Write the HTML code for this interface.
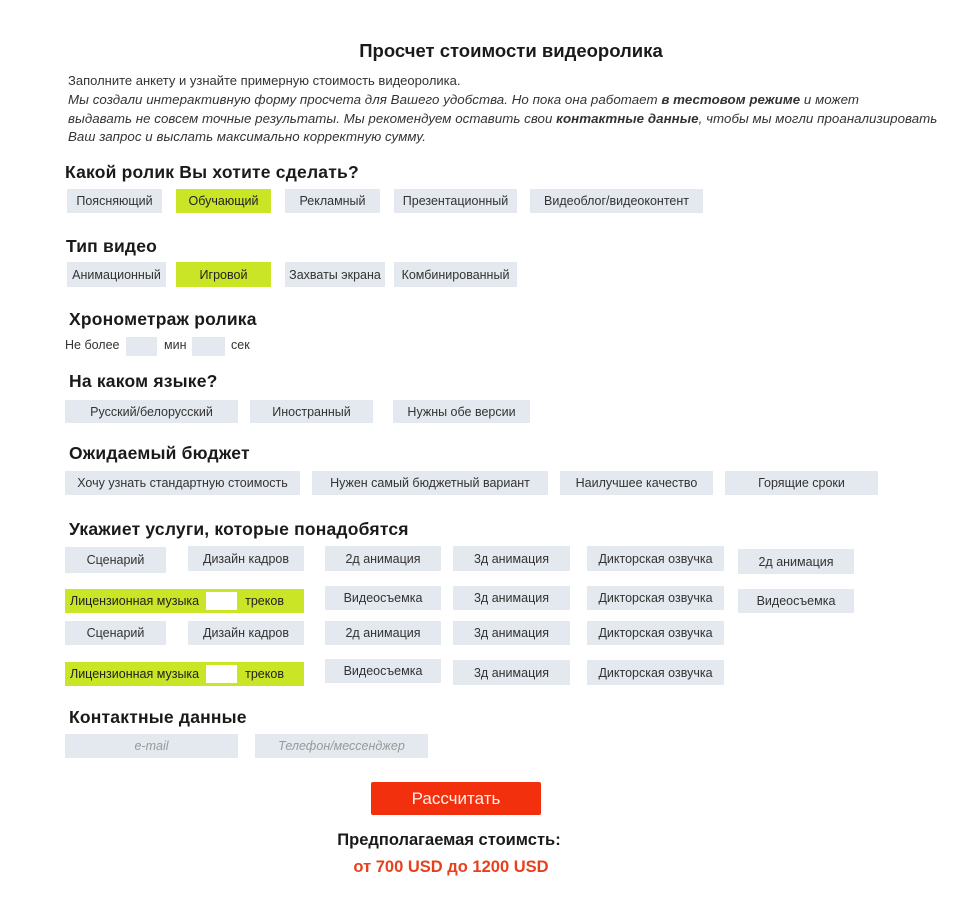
<!DOCTYPE html>
<html><head><meta charset="utf-8"><style>
body{margin:0;width:954px;height:907px;background:#fff;position:relative;font-family:"Liberation Sans",sans-serif;color:#222;overflow:hidden}
.a{position:absolute;white-space:nowrap}
.h{position:absolute;font-weight:bold;font-size:17.5px;letter-spacing:0.2px;color:#1a1a1a;white-space:nowrap}
.b{position:absolute;background:#e3e9ef;font-size:12.5px;color:#333;display:flex;align-items:center;justify-content:center;white-space:nowrap}
.g{background:#c9e526;color:#222}
.t{font-size:12.5px;color:#333}
.it{font-style:italic;font-size:13.3px;letter-spacing:0.05px}
i b{font-weight:bold}
</style></head><body>
<div class="a" style="left:0;width:1022px;text-align:center;top:40px;font-size:18.5px;font-weight:bold;color:#1a1a1a">Просчет стоимости видеоролика</div>
<div class="a t" style="left:68px;top:73px;font-size:13px">Заполните анкету и узнайте примерную стоимость видеоролика.</div>
<div class="a t it" style="left:68px;top:92px">Мы создали интерактивную форму просчета для Вашего удобства. Но пока она работает <b>в тестовом режиме</b> и может</div>
<div class="a t it" style="left:68px;top:111px">выдавать не совсем точные результаты. Мы рекомендуем оставить свои <b>контактные данные</b>, чтобы мы могли проанализировать</div>
<div class="a t it" style="left:68px;top:129px">Ваш запрос и выслать максимально корректную сумму.</div>

<div class="h" style="left:65px;top:162px">Какой ролик Вы хотите сделать?</div>
<div class="b" style="left:67px;top:189px;width:95px;height:24px">Поясняющий</div>
<div class="b g" style="left:176px;top:189px;width:95px;height:24px">Обучающий</div>
<div class="b" style="left:285px;top:189px;width:95px;height:24px">Рекламный</div>
<div class="b" style="left:394px;top:189px;width:123px;height:24px">Презентационный</div>
<div class="b" style="left:530px;top:189px;width:173px;height:24px">Видеоблог/видеоконтент</div>

<div class="h" style="left:66px;top:236px">Тип видео</div>
<div class="b" style="left:67px;top:262px;width:99px;height:25px">Анимационный</div>
<div class="b g" style="left:176px;top:262px;width:95px;height:25px">Игровой</div>
<div class="b" style="left:285px;top:262px;width:100px;height:25px">Захваты экрана</div>
<div class="b" style="left:394px;top:262px;width:123px;height:25px">Комбинированный</div>

<div class="h" style="left:69px;top:309px">Хронометраж ролика</div>
<div class="a t" style="left:65px;top:338px">Не более</div>
<div class="b" style="left:126px;top:337px;width:31px;height:19px"></div>
<div class="a t" style="left:164px;top:338px">мин</div>
<div class="b" style="left:192px;top:337px;width:33px;height:19px"></div>
<div class="a t" style="left:231px;top:338px">сек</div>

<div class="h" style="left:69px;top:371px">На каком языке?</div>
<div class="b" style="left:65px;top:400px;width:173px;height:23px">Русский/белорусский</div>
<div class="b" style="left:250px;top:400px;width:123px;height:23px">Иностранный</div>
<div class="b" style="left:393px;top:400px;width:137px;height:23px">Нужны обе версии</div>

<div class="h" style="left:69px;top:443px">Ожидаемый бюджет</div>
<div class="b" style="left:65px;top:471px;width:235px;height:24px">Хочу узнать стандартную стоимость</div>
<div class="b" style="left:312px;top:471px;width:236px;height:24px">Нужен самый бюджетный вариант</div>
<div class="b" style="left:560px;top:471px;width:153px;height:24px">Наилучшее качество</div>
<div class="b" style="left:725px;top:471px;width:153px;height:24px">Горящие сроки</div>

<div class="h" style="left:69px;top:519px">Укажиет услуги, которые понадобятся</div>
<div class="b" style="left:65px;top:547px;width:101px;height:26px">Сценарий</div>
<div class="b" style="left:188px;top:546px;width:116px;height:25px">Дизайн кадров</div>
<div class="b" style="left:325px;top:546px;width:116px;height:25px">2д анимация</div>
<div class="b" style="left:453px;top:546px;width:117px;height:25px">3д анимация</div>
<div class="b" style="left:587px;top:546px;width:137px;height:25px">Дикторская озвучка</div>
<div class="b" style="left:738px;top:549px;width:116px;height:25px">2д анимация</div>

<div class="b g" style="left:65px;top:589px;width:239px;height:24px;justify-content:flex-start"><span style="margin-left:5px">Лицензионная музыка</span><span style="display:inline-block;width:31px;height:18px;background:#fff;margin:0 8px 0 7px"></span><span>треков</span></div>
<div class="b" style="left:325px;top:586px;width:116px;height:24px">Видеосъемка</div>
<div class="b" style="left:453px;top:586px;width:117px;height:24px">3д анимация</div>
<div class="b" style="left:587px;top:586px;width:137px;height:24px">Дикторская озвучка</div>
<div class="b" style="left:738px;top:589px;width:116px;height:24px">Видеосъемка</div>

<div class="b" style="left:65px;top:621px;width:101px;height:24px">Сценарий</div>
<div class="b" style="left:188px;top:621px;width:116px;height:24px">Дизайн кадров</div>
<div class="b" style="left:325px;top:621px;width:116px;height:24px">2д анимация</div>
<div class="b" style="left:453px;top:621px;width:117px;height:24px">3д анимация</div>
<div class="b" style="left:587px;top:621px;width:137px;height:24px">Дикторская озвучка</div>

<div class="b g" style="left:65px;top:662px;width:239px;height:24px;justify-content:flex-start"><span style="margin-left:5px">Лицензионная музыка</span><span style="display:inline-block;width:31px;height:18px;background:#fff;margin:0 8px 0 7px"></span><span>треков</span></div>
<div class="b" style="left:325px;top:659px;width:116px;height:24px">Видеосъемка</div>
<div class="b" style="left:453px;top:660px;width:117px;height:25px">3д анимация</div>
<div class="b" style="left:587px;top:660px;width:137px;height:25px">Дикторская озвучка</div>

<div class="h" style="left:69px;top:707px">Контактные данные</div>
<div class="b" style="left:65px;top:734px;width:173px;height:24px;color:#999;font-style:italic">e-mail</div>
<div class="b" style="left:255px;top:734px;width:173px;height:24px;color:#999;font-style:italic">Телефон/мессенджер</div>

<div class="b" style="left:371px;top:782px;width:170px;height:33px;background:#f3300e;font-size:17px;border-radius:2px;color:#fff0ea">Рассчитать</div>
<div class="a" style="left:0;width:898px;text-align:center;top:831px;font-size:16.5px;font-weight:bold;color:#1a1a1a">Предполагаемая стоимсть:</div>
<div class="a" style="left:0;width:902px;text-align:center;top:858px;font-size:16.5px;font-weight:bold;color:#e8401c">от 700 USD до 1200 USD</div>
</body></html>
